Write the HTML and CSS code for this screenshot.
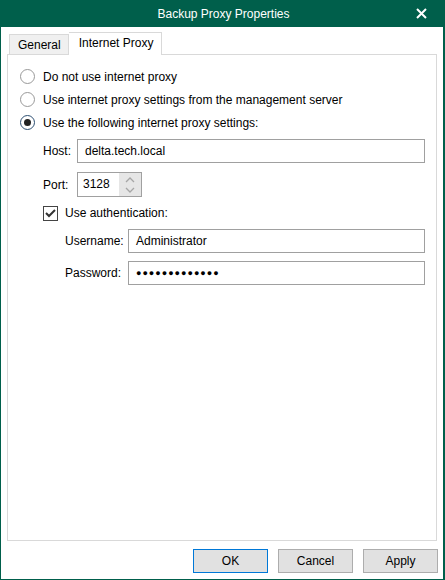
FILE: index.html
```html
<!DOCTYPE html>
<html lang="en">

    <head>
        <meta charset="UTF-8">
        <title>Backup Proxy Properties</title>
        <link rel="stylesheet" href="styles.css">
    </head>

    <body>
        <div class="window">
            <div class="titlebar">
                <span></span>
                <span class="title">Backup Proxy Properties</span>
                <span class="close">
                    <svg width="11" height="11" viewBox="0 0 11 11">
                        <path d="M1 1 L10 10 M10 1 L1 10" stroke="#fff" stroke-width="2" fill="none"/>
                    </svg>
                </span>
            </div>
            <div class="content">
                <ul class="tabs">
                    <li class="tab">General</li>
                    <li class="tab active">Internet Proxy</li>
                </ul>
                <div class="panel">
                    <label class="radio"><span class="circle"></span>Do not use internet proxy</label>
                    <label class="radio"><span class="circle"></span>Use internet proxy settings from the management server</label>
                    <label class="radio"><span class="circle checked"></span>Use the following internet proxy settings:</label>

                    <div class="settings">
                        <div class="field">
                            <span class="label">Host:</span>
                            <div class="input wide">delta.tech.local</div>
                        </div>
                        <div class="field port">
                            <span class="label">Port:</span>
                            <div class="input num">3128</div>
                            <div class="spin">
                                <svg width="10" height="6" viewBox="0 0 10 6"><path d="M1 5 L5 1 L9 5" stroke="#a6a6a6" stroke-width="1.3" fill="none"/></svg>
                                <svg width="10" height="6" viewBox="0 0 10 6"><path d="M1 1 L5 5 L9 1" stroke="#a6a6a6" stroke-width="1.3" fill="none"/></svg>
                            </div>
                        </div>
                        <label class="check">
                            <span class="box">
                                <svg width="11" height="9" viewBox="0 0 11 9"><path d="M1 4 L4 7 L10 1" stroke="#333" stroke-width="2" fill="none"/></svg>
                            </span>
                            Use authentication:
                        </label>
                        <div class="auth">
                            <div class="field">
                                <span class="label">Username:</span>
                                <div class="input wide">Administrator</div>
                            </div>
                            <div class="field">
                                <span class="label">Password:</span>
                                <div class="input wide dots">●●●●●●●●●●●●●</div>
                            </div>
                        </div>
                    </div>
                </div>
            </div>
            <div class="buttons">
                <button class="btn default">OK</button>
                <button class="btn">Cancel</button>
                <button class="btn">Apply</button>
            </div>
        </div>
    </body>

</html>
```

FILE: styles.css
```css
* {
    padding: 0;
    margin: 0;
    box-sizing: border-box;
    list-style: none;
}

body {
    font-family: "Liberation Sans", Arial, sans-serif;
    font-size: 12px;
    color: #000;
    background: #fff;
}

.window {
    display: flex;
    flex-direction: column;
    width: 445px;
    height: 580px;
    border: 1px solid #005f4b;
    border-top: none;
    border-right-width: 2px;
    background: #fff;
}

.titlebar {
    display: grid;
    grid-template-columns: 1fr auto 1fr;
    align-items: center;
    height: 27px;
    margin: 0 -2px 0 -1px;
    background: #005f4b;
    color: #fff;
}

.titlebar .title {
    padding-left: 2px;
}

.titlebar .close {
    display: flex;
    justify-self: end;
    margin-right: 18px;
}

.content {
    display: flex;
    flex: 1;
    flex-direction: column;
    padding: 5px 6px 0 6px;
}

.tabs {
    display: flex;
    align-items: flex-end;
    height: 22px;
    padding-left: 2px;
}

.tab {
    height: 20px;
    padding: 0 7px 0 8px;
    line-height: 20px;
    border: 1px solid #d9d9d9;
    border-bottom: none;
    background: #f0f0f0;
}

.tab.active {
    height: 23px;
    margin-bottom: -1px;
    padding: 0 8px 0 10px;
    line-height: 21px;
    border-left: none;
    background: #fff;
    position: relative;
}

.panel {
    flex: 1;
    padding: 10px 11px 0 12px;
    border: 1px solid #d9d9d9;
}

.radio {
    display: flex;
    align-items: center;
    gap: 8px;
    height: 23px;
}

.circle {
    width: 15px;
    height: 15px;
    border: 1px solid #999;
    border-radius: 50%;
    background: #fff;
}

.circle.checked {
    display: flex;
    align-items: center;
    justify-content: center;
    border-color: #2d4f72;
}

.circle.checked::after {
    content: "";
    width: 7px;
    height: 7px;
    border-radius: 50%;
    background: #222;
}

.settings {
    display: flex;
    flex-direction: column;
    gap: 9px;
    padding: 5px 0 0 23px;
}

.field {
    display: flex;
    align-items: center;
}

.field .label {
    width: 34px;
}

.input {
    height: 24px;
    padding-left: 7px;
    line-height: 22px;
    border: 1px solid #a0a0a0;
    background: #fff;
}

.wide {
    flex: 1;
}

.port .input {
    height: 25px;
    line-height: 23px;
    width: 42px;
    border-right: none;
    padding-left: 5px;
}

.spin {
    display: flex;
    flex-direction: column;
    align-items: center;
    justify-content: center;
    gap: 4px;
    width: 23px;
    height: 25px;
    border: 1px solid #a0a0a0;
    border-left: none;
    background: #e6e6e6;
}

.check {
    display: flex;
    align-items: center;
    gap: 7px;
    height: 16px;
    margin-top: -1px;
}

.box {
    display: flex;
    align-items: center;
    justify-content: center;
    width: 15px;
    height: 15px;
    border: 1px solid #444;
}

.auth {
    display: flex;
    flex-direction: column;
    gap: 8px;
    padding-left: 22px;
    margin-top: -1px;
}

.auth .label {
    width: 63px;
}

.dots {
    font-size: 9px;
    letter-spacing: 1px;
}

.buttons {
    display: flex;
    justify-content: flex-end;
    gap: 10px;
    padding: 8px 5px 6px 0;
}

.btn {
    width: 75px;
    height: 24px;
    font-family: inherit;
    font-size: 12px;
    color: #000;
    border: 1px solid #adadad;
    background: #e1e1e1;
}

.btn.default {
    border-color: #0078d7;
}
```
